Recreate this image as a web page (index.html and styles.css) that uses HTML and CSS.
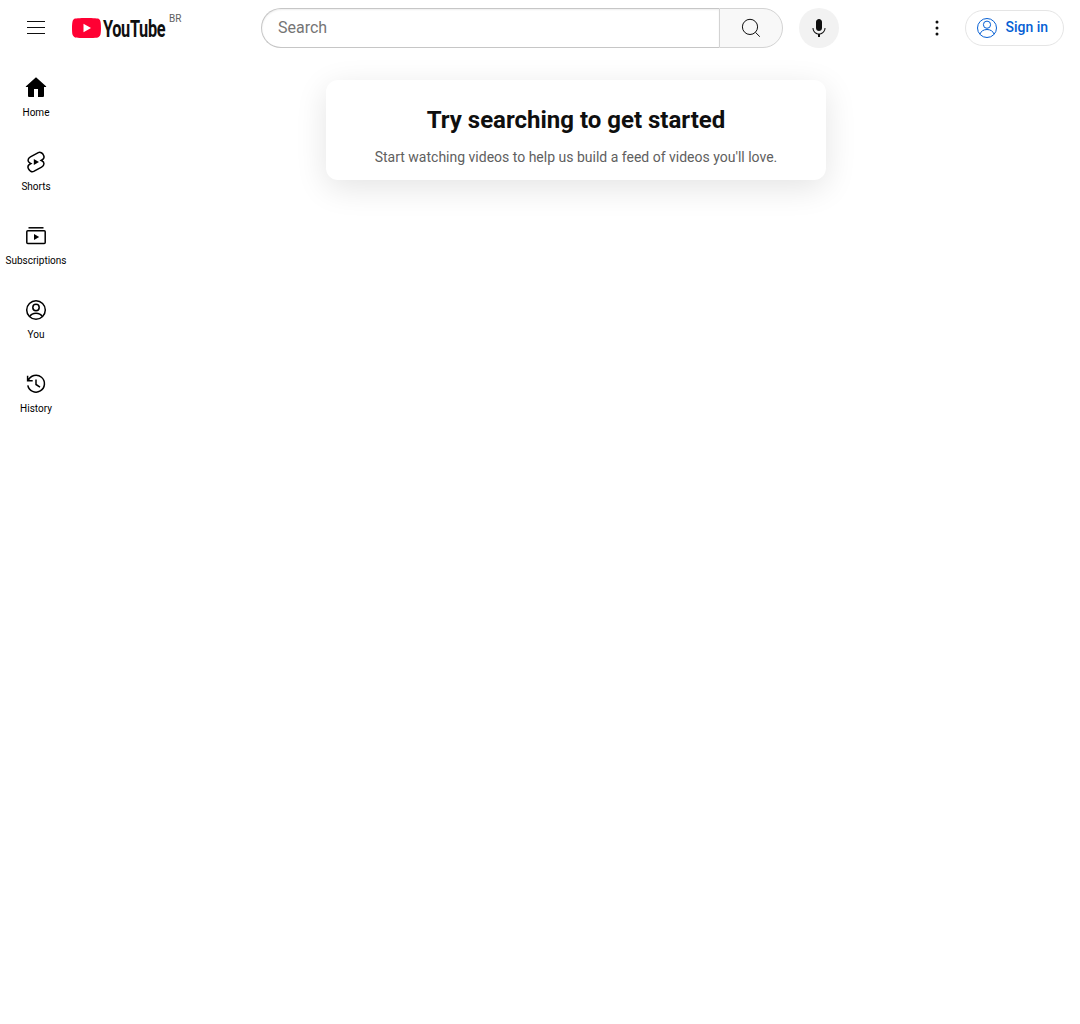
FILE: index.html
```html
<!DOCTYPE html>
<html lang="en">
<head>
<meta charset="utf-8">
<title>YouTube</title>
<link rel="stylesheet" href="styles.css">
</head>
<body>
<header class="masthead">
  <div class="start">
    <button class="icon-button" aria-label="Guide"><svg class="icon" viewBox="0 0 24 24"><path d="M21 6H3V5h18v1zm0 5v1H3v-1h18zm0 6v1H3v-1h18z"/></svg></button>
    <a class="logo" aria-label="YouTube Home">
      <svg width="94" height="24" viewBox="0 0 94 24">
        <path fill="#f03" d="M14.48 20s9.09 0 11.34-.6c1.27-.34 2.22-1.32 2.56-2.53.62-2.22.62-6.89.62-6.89s0-4.64-.62-6.84C28.05 1.9 27.09.94 25.82.61 23.57 0 14.48 0 14.48 0S5.42 0 3.18.61C1.93.94.95 1.9.59 3.14 0 5.34 0 9.98 0 9.98s0 4.67.59 6.89c.36 1.21 1.34 2.19 2.59 2.53 2.24.6 11.3.6 11.3.6Z"/>
        <path fill="#fff" d="M19 10l-7.5-4.25v8.5z"/>
        <text class="wordmark" transform="translate(31 18.8) scale(.68 1)" textLength="92" lengthAdjust="spacing">YouTube</text>
      </svg>
      <span class="country">BR</span>
    </a>
  </div>
  <div class="center">
    <form class="search">
      <input class="search-input" type="text" placeholder="Search" aria-label="Search">
      <button class="search-button" type="button" aria-label="Search"><svg class="icon line" viewBox="0 0 24 24"><circle cx="11" cy="10.9" r="7.6"/><path d="M16.4 16.3l4.4 4.4"/></svg></button>
    </form>
    <button class="mic" aria-label="Search with your voice"><svg class="icon" viewBox="0 0 24 24"><path d="M12 3c-1.66 0-3 1.37-3 3.07v5.86c0 1.7 1.34 3.07 3 3.07s3-1.37 3-3.07V6.07C15 4.37 13.66 3 12 3zM18.5 12h-1c0 3.03-2.47 5.5-5.5 5.5S6.5 15.03 6.5 12h-1c0 3.24 2.39 5.93 5.5 6.41V21h2v-2.59c3.11-.48 5.5-3.17 5.5-6.41z"/></svg></button>
  </div>
  <div class="end">
    <button class="icon-button" aria-label="Settings"><svg class="icon" viewBox="0 0 24 24"><circle cx="12" cy="6" r="1.5"/><circle cx="12" cy="12" r="1.5"/><circle cx="12" cy="18" r="1.5"/></svg></button>
    <a class="sign-in"><svg class="icon line" viewBox="0 0 24 24"><circle cx="12" cy="12" r="9.5"/><circle cx="12" cy="8.7" r="3.6"/><path d="M4.9 18.2c1-3 3.7-4.7 7.1-4.7s6.1 1.7 7.1 4.7"/></svg><span>Sign in</span></a>
  </div>
</header>
<div class="page">
  <nav class="guide">
    <a class="entry"><svg class="icon" viewBox="0 0 24 24"><path d="M12 1.3L2 10.3c-.4.4-.2.8.3.8H4V20a1 1 0 001 1h5v-8h4v8h5a1 1 0 001-1v-8.900h1.700c.5 0 .7-.4.3-.8z"/></svg><span>Home</span></a>
    <a class="entry"><svg class="icon bold-line" viewBox="0 0 24 24"><path d="M14.3 2.7L6.4 6.900C3.300 8.600 3.300 12 6.200 13.200l.7.3-.8.5c-2 1.100-2.500 3.200-1.600 4.900 1 2 3.200 3.400 5.200 2.400l7.900-4.200c3.100-1.700 3.100-5.100.2-6.300l-.7-.3.8-.5c2-1.100 2.500-3.200 1.600-4.900-1-2-3.200-3.400-5.200-2.400z"/><path class="solid" d="M9.800 9.100l5.200 2.900-5.200 2.900z"/></svg><span>Shorts</span></a>
    <a class="entry"><svg class="icon bold-line" viewBox="0 0 24 24"><path d="M4.500 3.800h15"/><rect x="2.800" y="6.800" width="18.400" height="12.600" rx="1"/><path class="solid" d="M10 10l5.200 3-5.200 3z"/></svg><span>Subscriptions</span></a>
    <a class="entry"><svg class="icon bold-line" viewBox="0 0 24 24"><circle cx="12" cy="12" r="9.300"/><circle cx="12" cy="9.500" r="3.200"/><path d="M5.700 18.500c1.300-2.300 3.600-3.300 6.300-3.300s5 1 6.300 3.300"/></svg><span>You</span></a>
    <a class="entry"><svg class="icon bold-line" viewBox="0 0 24 24"><path d="M4.200 8.700A8.400 8.400 0 1 1 3.800 13.300M3.600 3.700V8.800H8.700M12 7.500V12.500l4 2.600"/></svg><span>History</span></a>
  </nav>
  <main class="content">
    <section class="nudge">
      <h1>Try searching to get started</h1>
      <p>Start watching videos to help us build a feed of videos you'll love.</p>
    </section>
  </main>
</div>
</body>
</html>
```
FILE: styles.css
```css
* { box-sizing: border-box; }
body { margin: 0; background: #fff; color: #0f0f0f; font-family: Roboto, Arial, sans-serif; }
button { border: 0; padding: 0; background: none; font: inherit; }
.icon { display: block; width: 24px; height: 24px; flex: none; fill: #0f0f0f; }
.line { fill: none; stroke: #0f0f0f; stroke-width: 1; }
.bold-line { fill: none; stroke: #000; stroke-width: 1.5; }
.solid { fill: #000; stroke: none; }

.masthead { display: grid; grid-template-columns: 245px 594px 1fr; height: 56px; padding-right: 16px; }
.start, .center, .end { display: flex; align-items: center; }
.start { padding-left: 16px; }
.icon-button { display: grid; place-items: center; width: 40px; height: 40px; }
.logo { display: flex; align-items: flex-start; height: 56px; padding: 18px 0 0 16px; }
.logo svg { display: block; overflow: visible; }
.wordmark { font-size: 24px; font-weight: 700; fill: #0f0f0f; }
.country { margin: -5px 0 0 3px; font-size: 10px; line-height: 12px; color: #606060; }
.center { padding-left: 16px; gap: 16px; }
.search { display: flex; width: 522px; height: 40px; }
.search-input { width: 458px; padding: 0 16px; border: 1px solid #c6c6c6; border-right: 0; border-radius: 40px 0 0 40px; box-shadow: inset 0 1px 2px #eee; font: 16px/24px Roboto, Arial, sans-serif; }
.search-input::placeholder { color: #757575; opacity: 1; }
.search-button { display: grid; place-items: center; width: 64px; border: 1px solid #d3d3d3; border-radius: 0 40px 40px 0; background: #f8f8f8; }
.mic { display: grid; place-items: center; width: 40px; height: 40px; border-radius: 50%; background: #f2f2f2; }
.end { justify-content: flex-end; gap: 8px; }
.sign-in { display: flex; align-items: center; width: 99px; height: 36px; padding-left: 9px; gap: 6.5px; border: 1px solid #e5e5e5; border-radius: 18px; color: #065fd4; font-size: 14px; font-weight: 500; }
.sign-in .icon { stroke: #065fd4; }
.sign-in span { margin-top: -2px; }

.page { display: flex; }
.guide { display: flex; flex-direction: column; width: 72px; padding-top: 4px; }
.entry { display: flex; flex-direction: column; align-items: center; height: 74px; padding-top: 16px; gap: 6px; font-size: 10px; line-height: 14px; color: #000; }
.entry .icon:not(.bold-line) { fill: #000; }
.content { display: flex; flex: 1; justify-content: center; align-items: flex-start; padding-top: 24px; }
.nudge { width: 500px; height: 100px; padding-top: 24px; border-radius: 12px; background: #fff; box-shadow: 0 8px 32px rgba(0, 0, 0, .11); text-align: center; }
.nudge h1 { margin: 0; font-size: 24px; line-height: 32px; font-weight: 700; }
.nudge p { margin: 11px 0 0; font-size: 14px; line-height: 20px; color: #606060; }
```
